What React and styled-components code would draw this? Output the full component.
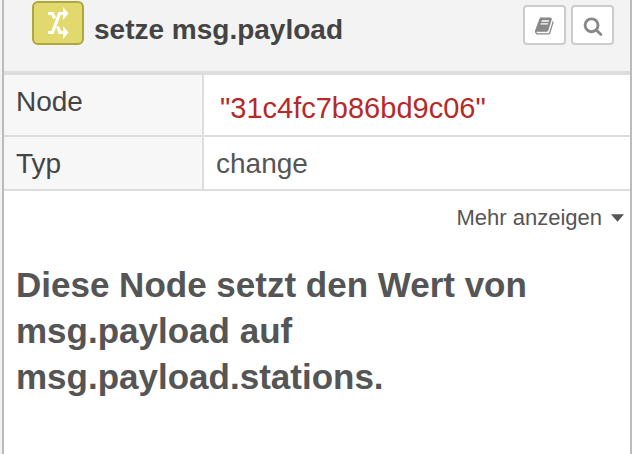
import React, { useState } from "react";
import styled, { createGlobalStyle } from "styled-components";

const GlobalStyle = createGlobalStyle`
  * {
    box-sizing: border-box;
  }
  body {
    margin: 0;
    background: #f3f3f3;
    color: #555;
    font-family: "Liberation Sans", Arial, sans-serif;
  }
`;

const Sidebar = styled.section`
  min-height: 100vh;
  margin-left: 2px;
  background: #fff;
  border-left: 2px solid #bbb;
  border-right: 2px solid #bbb;
`;

const Header = styled.header`
  display: flex;
  align-items: flex-start;
  padding: 1px 16px 25px 28px;
  background: #f3f3f3;
  border-bottom: 4px solid #ddd;
`;

const NodeIcon = styled.div`
  display: flex;
  align-items: center;
  justify-content: center;
  width: 52px;
  height: 44px;
  background: #e2d96e;
  border: 2px solid #afa63c;
  border-radius: 6px;
`;

const Title = styled.h1`
  flex: 1;
  margin: 13px 10px 0;
  color: #444;
  font-size: 28px;
  line-height: 32px;
`;

const Toolbar = styled.div`
  display: flex;
  gap: 5px;
  padding-top: 4px;
`;

const ToolButton = styled.button`
  display: flex;
  align-items: center;
  justify-content: center;
  width: 43px;
  height: 40px;
  padding: 2px 0 0;
  color: #888;
  background: #fff;
  border: 2px solid #ccc;
  border-radius: 4px;
  cursor: pointer;
`;

const Properties = styled.table`
  width: 100%;
  border-collapse: separate;
  border-spacing: 0;
  font-size: 28px;
  line-height: 32px;
`;

const Label = styled.th`
  width: 200px;
  padding: 11px 12px 9px;
  color: #444;
  background: #f7f7f7;
  border-right: 2px solid #ddd;
  border-bottom: 2px solid #ddd;
  font-weight: normal;
  text-align: left;
  vertical-align: top;
`;

const Value = styled.td`
  padding: 11px 12px 9px;
  border-bottom: 2px solid #ddd;
`;

const StringValue = styled.div`
  padding: 6px 4px 2px;
  color: #b72828;
  font-size: 29px;
`;

const MoreRow = styled.div`
  display: flex;
  justify-content: flex-end;
  padding: 13px 6px 11px;
`;

const MoreButton = styled.button`
  display: flex;
  align-items: center;
  gap: 9px;
  padding: 0;
  color: #555;
  background: none;
  border: none;
  font-family: inherit;
  font-size: 22px;
  line-height: 28px;
  cursor: pointer;
`;

const Description = styled.h2`
  margin: 19px 12px;
  font-size: 35px;
  line-height: 46px;
`;

function ShuffleIcon() {
  return (
    <svg width="22" height="32" viewBox="0 0 22 32" aria-hidden="true">
      <path d="M1 25.5h4.5L12.5 6.5H17" fill="none" stroke="#fff" strokeWidth="3.2" />
      <path d="M1 6.5h4.5l2.2 5M10.6 19.5l2.2 6H17" fill="none" stroke="#fff" strokeWidth="3.2" />
      <path d="M16 0l5.5 6.5L16 13zM16 19l5.5 6.5L16 32z" fill="#fff" />
    </svg>
  );
}

function BookIcon() {
  return (
    <svg width="20" height="20" viewBox="0 0 1792 1792" fill="currentColor" aria-hidden="true">
      <path d="M1639 478q40 57 18 129l-275 906q-19 64-76.5 107.5t-122.5 43.5h-923q-77 0-148.5-53.5t-99.5-131.5q-24-67-2-127 0-4 3-27t4-37q1-8-3-21.5t-3-19.5q2-11 8-21t16.5-23.5 16.5-23.5q23-38 45-91.5t30-91.5q3-10 .5-30t-.5-28q3-11 17-28t17-23q21-36 42-92t25-90q1-9-2.5-32t.5-28q4-13 22-30.5t22-22.5q19-26 42.5-84.5t27.5-96.5q1-8-3-25.5t-2-26.5q2-8 9-18t18-23 17-21q8-12 16.5-30.5t15-35 16-36 19.5-32 26.5-23.5 36-11.5 47.5 5.5l-1 3q38-9 51-9h761q74 0 114 56t18 130l-274 906q-36 119-71.5 153.5t-128.5 34.5h-869q-27 0-38 15-11 16-1 43 24 70 144 70h923q29 0 56-15.5t35-41.5l300-987q7-22 5-57 38 15 59 43zm-1064 2q-4 13 2 22.5t20 9.5h608q13 0 25.5-9.5t16.5-22.5l21-64q4-13-2-22.5t-20-9.5h-608q-13 0-25.5 9.5t-16.5 22.5zm-83 256q-4 13 2 22.5t20 9.5h608q13 0 25.5-9.5t16.5-22.5l21-64q4-13-2-22.5t-20-9.5h-608q-13 0-25.5 9.5t-16.5 22.5z" />
    </svg>
  );
}

function SearchIcon() {
  return (
    <svg width="20" height="20" viewBox="0 0 1792 1792" fill="currentColor" aria-hidden="true">
      <path d="M1216 832q0-185-131.5-316.5t-316.5-131.5-316.5 131.5-131.5 316.5 131.5 316.5 316.5 131.5 316.5-131.5 131.5-316.5zm512 832q0 52-38 90t-90 38q-54 0-90-38l-343-342q-179 124-399 124-143 0-273.5-55.5t-225-150-150-225-55.5-273.5 55.5-273.5 150-225 225-150 273.5-55.5 273.5 55.5 225 150 150 225 55.5 273.5q0 220-124 399l343 343q37 37 37 90z" />
    </svg>
  );
}

function CaretIcon() {
  return (
    <svg width="13" height="8" viewBox="0 0 12 7" fill="currentColor" aria-hidden="true">
      <path d="M0 0h12L6 7z" />
    </svg>
  );
}

export default function App() {
  const [expanded, setExpanded] = useState(false);

  return (
    <>
      <GlobalStyle />
      <Sidebar>
        <Header>
          <NodeIcon>
            <ShuffleIcon />
          </NodeIcon>
          <Title>setze msg.payload</Title>
          <Toolbar>
            <ToolButton type="button" aria-label="Hilfe">
              <BookIcon />
            </ToolButton>
            <ToolButton type="button" aria-label="Suchen">
              <SearchIcon />
            </ToolButton>
          </Toolbar>
        </Header>

        <Properties>
          <tbody>
            <tr>
              <Label scope="row">Node</Label>
              <Value>
                <StringValue>"31c4fc7b86bd9c06"</StringValue>
              </Value>
            </tr>
            <tr>
              <Label scope="row">Typ</Label>
              <Value>change</Value>
            </tr>
          </tbody>
        </Properties>

        <MoreRow>
          <MoreButton type="button" aria-expanded={expanded} onClick={() => setExpanded(!expanded)}>
            Mehr anzeigen
            <CaretIcon />
          </MoreButton>
        </MoreRow>

        <Description>Diese Node setzt den Wert von msg.payload auf msg.payload.stations.</Description>
      </Sidebar>
    </>
  );
}
